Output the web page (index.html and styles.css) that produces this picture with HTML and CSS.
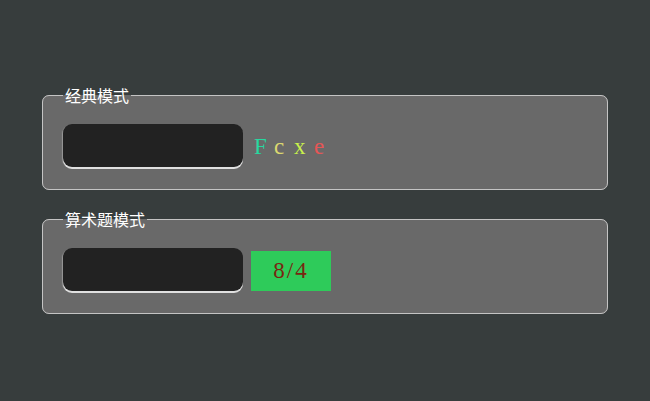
FILE: index.html
```html
<!DOCTYPE html>
<html lang="zh">
<head>
  <meta charset="UTF-8">
  <title>验证码</title>
  <link rel="stylesheet" href="styles.css">
</head>
<body>

  <div class="wrap">
    <fieldset class="mode">
      <legend>经典模式</legend>
      <div class="row">
        <input class="code-input" type="text">
        <div class="captcha">
          <span class="c1">F</span><span class="c2">c</span><span class="c3">x</span><span class="c4">e</span>
        </div>
      </div>
    </fieldset>

    <fieldset class="mode">
      <legend>算术题模式</legend>
      <div class="row">
        <input class="code-input" type="text">
        <div class="math">8/4</div>
      </div>
    </fieldset>
  </div>

</body>
</html>
```

FILE: styles.css
```css
/* Grundlayout */
body {
  margin: 0;
  background: #373d3d;
  font-family: "Noto Sans CJK SC", sans-serif;
}
.wrap {
  padding: 86px 42px 0 42px;
  display: flex;
  flex-direction: column;
  gap: 20px;
}
/* Fieldset-Boxen */
.mode {
  margin: 0;
  width: 566px;
  box-sizing: border-box;
  background: #696969;
  border: 1px solid #c4c4c4;
  border-radius: 7px;
  padding: 20px 20px 20px 20px;
}
.mode legend {
  color: #fff;
  font-size: 16px;
  line-height: 18px;
  padding: 0 2px;
}
.row {
  display: flex;
  align-items: center;
}
/* Eingabefeld */
.code-input {
  width: 180px;
  height: 43px;
  box-sizing: border-box;
  margin: 0 0 2px 0;
  background: #222;
  border: none;
  border-radius: 9px;
  box-shadow: 0 2px 0 #e0e0e0, -1px 1px 1px #9a9a9a;
  outline: none;
  color: #fff;
}
/* Buchstaben-Captcha */
.captcha {
  display: flex;
  margin-left: 11px;
  font-family: "Liberation Serif", serif;
  font-size: 23px;
}
.captcha span {
  width: 20px;
}
.c1 { color: #28d8a0; }
.c2 { color: #dcd870; }
.c3 { color: #c8f04c; }
.c4 { color: #e65656; }
/* Rechen-Captcha */
.math {
  margin-left: 8px;
  width: 80px;
  height: 40px;
  background: #2ecb5a;
  color: #7a2410;
  font-family: "Liberation Serif", serif;
  font-size: 23px;
  letter-spacing: 2px;
  display: flex;
  align-items: center;
  justify-content: center;
}
```
